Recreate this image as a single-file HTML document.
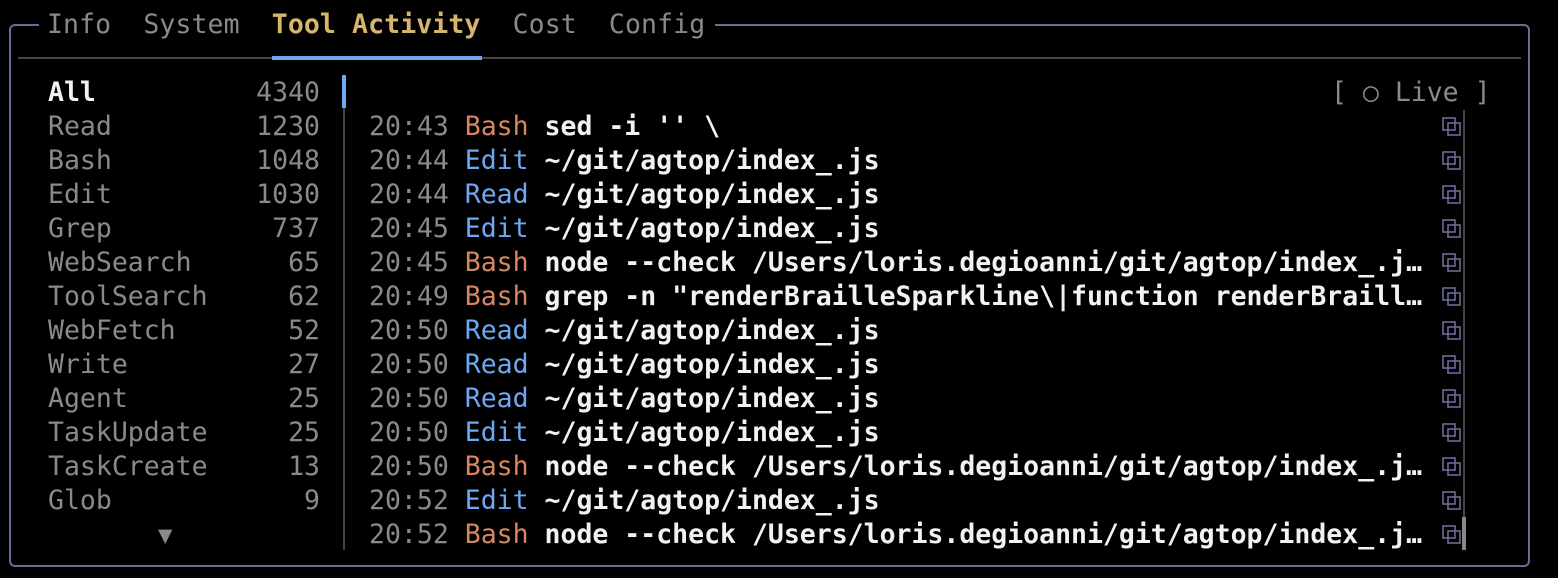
<!DOCTYPE html>
<html><head><meta charset="utf-8"><style>
html,body{margin:0;background:#000;width:1558px;height:578px;overflow:hidden}
body{position:relative;font-family:"DejaVu Sans Mono","Liberation Mono",monospace;font-size:26.5px;color:#8a8a8a}
.box{position:absolute;left:9px;top:24px;width:1521px;height:543px;border:2px solid #6b6a98;border-radius:6px;box-sizing:border-box}
.r{position:absolute;height:34px;line-height:34px;white-space:pre}
.w{color:#f2f2f2;font-weight:bold}
.o{color:#d7875f}.b{color:#6ea8f2}
.tabs{position:absolute;left:30px;top:8px;height:34px;line-height:34px;background:#000;padding:0 10px 0 8px;white-space:pre;letter-spacing:0.1px}
.ic{position:absolute;left:1442px}
</style></head><body>
<div class="box"></div>
<div class="tabs" style="left:39px">Info  System  <span style="color:#d8b56c;font-weight:bold">Tool Activity</span>  Cost  Config</div>
<div style="position:absolute;left:18px;top:57px;width:1503px;height:2px;background:#444"></div>
<div style="position:absolute;left:272px;top:56px;width:210px;height:4px;background:#6ea8f2"></div>
<div style="position:absolute;left:343px;top:75px;width:2px;height:475px;background:#444"></div>
<div style="position:absolute;left:342px;top:75px;width:4px;height:33px;background:#6ea8f2"></div>
<div style="position:absolute;left:1463px;top:110px;width:2px;height:440px;background:#444"></div>
<div style="position:absolute;left:1462px;top:517px;width:4px;height:33px;background:#888"></div>
<div class="r" style="left:1331px;top:76px">[ ○ Live ]</div>
<div id="L"></div><div id="R"></div>
<script>
var L=[["All","4340"],["Read","1230"],["Bash","1048"],["Edit","1030"],["Grep","737"],["WebSearch","65"],["ToolSearch","62"],["WebFetch","52"],["Write","27"],["Agent","25"],["TaskUpdate","25"],["TaskCreate","13"],["Glob","9"]];
var h="";L.forEach(function(x,i){var t=76+i*34;var c=i==0?' class="r w"':' class="r"';h+='<div'+c+' style="left:48px;top:'+t+'px">'+x[0]+'</div><div class="r" style="left:200px;width:120px;text-align:right;top:'+t+'px'+(i==0?';color:#8a8a8a':'')+'">'+x[1]+'</div>';});
h+='<div class="r" style="left:158px;top:518px;font-size:24px">▼</div>';
document.getElementById("L").innerHTML=h;
var R=[["20:43","Bash","sed -i '' \\"],["20:44","Edit","~/git/agtop/index_.js"],["20:44","Read","~/git/agtop/index_.js"],["20:45","Edit","~/git/agtop/index_.js"],["20:45","Bash","node --check /Users/loris.degioanni/git/agtop/index_.j…"],["20:49","Bash","grep -n \"renderBrailleSparkline\\|function renderBraill…"],["20:50","Read","~/git/agtop/index_.js"],["20:50","Read","~/git/agtop/index_.js"],["20:50","Read","~/git/agtop/index_.js"],["20:50","Edit","~/git/agtop/index_.js"],["20:50","Bash","node --check /Users/loris.degioanni/git/agtop/index_.j…"],["20:52","Edit","~/git/agtop/index_.js"],["20:52","Bash","node --check /Users/loris.degioanni/git/agtop/index_.j…"]];
h="";R.forEach(function(x,i){var t=110+i*34;var c=x[1]=="Bash"?"o":"b";
h+='<div class="r" style="left:369px;top:'+t+'px">'+x[0]+' <span class="'+c+'">'+x[1]+'</span> <span class="w">'+x[2].replace(/&/g,"&amp;").replace(/</g,"&lt;")+'</span></div>';
h+='<svg class="ic" style="top:'+(t+7)+'px" width="20" height="20" viewBox="0 0 20 20" fill="none" stroke="#6b6a98" stroke-width="1.6"><rect x="1" y="1" width="12" height="12"/><rect x="6" y="6" width="12" height="12"/></svg>';});
document.getElementById("R").innerHTML=h;
</script>
</body></html>
